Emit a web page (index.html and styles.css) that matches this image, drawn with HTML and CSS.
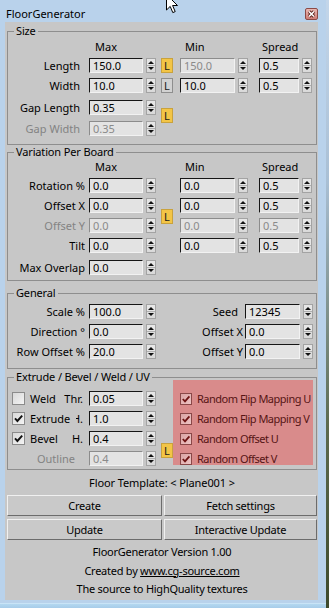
FILE: index.html
```html
<!DOCTYPE html>
<html>
<head>
<meta charset="utf-8">
<title>FloorGenerator</title>
<link rel="stylesheet" href="styles.css">
</head>
<body>
<div class="screen">
  <div class="window">
    <header class="titlebar">
      <span class="title">FloorGenerator</span>
      <span class="close">
        <svg width="11" height="10" viewBox="0 0 11 10"><path d="M3 2.5 L8 7.5 M8 2.5 L3 7.5" stroke="#5a1e1a" stroke-width="3.2"/><path d="M3 2.5 L8 7.5 M8 2.5 L3 7.5" stroke="#fff" stroke-width="1.6"/></svg>
      </span>
    </header>
    <main class="client">
      <fieldset class="group g-size">
        <legend>Size</legend>
        <div class="grid5 size-rows">
          <span class="hd c2 hd-max">Max</span>
          <span class="hd c4 hd-min">Min</span>
          <span class="hd c5 hd-spr">Spread</span>

          <span class="lbl c1">Length</span>
          <span class="ctl c2"><span class="num w54">150.0</span><span class="spin"></span></span>
          <span class="lock on c3">L</span>
          <span class="ctl c4"><span class="num w55 dis">150.0</span><span class="spin"></span></span>
          <span class="ctl c5"><span class="num w40">0.5</span><span class="spin"></span></span>

          <span class="lbl c1">Width</span>
          <span class="ctl c2"><span class="num w54">10.0</span><span class="spin"></span></span>
          <span class="lock off c3">L</span>
          <span class="ctl c4"><span class="num w55">10.0</span><span class="spin"></span></span>
          <span class="ctl c5"><span class="num w40">0.5</span><span class="spin"></span></span>

          <span class="lbl c1">Gap Length</span>
          <span class="ctl c2"><span class="num w54">0.35</span><span class="spin"></span></span>
          <span class="lock on c3 span2 lock-gap">L</span>

          <span class="lbl c1 dim">Gap Width</span>
          <span class="ctl c2"><span class="num w54 dis">0.35</span><span class="spin"></span></span>
        </div>
      </fieldset>

      <fieldset class="group g-var">
        <legend>Variation Per Board</legend>
        <div class="grid5 var-rows">
          <span class="hd c2 hd-max">Max</span>
          <span class="hd c4 hd-min">Min</span>
          <span class="hd c5 hd-spr">Spread</span>

          <span class="lbl c1">Rotation %</span>
          <span class="ctl c2"><span class="num w54">0.0</span><span class="spin"></span></span>
          <span class="ctl c4"><span class="num w55">0.0</span><span class="spin"></span></span>
          <span class="ctl c5"><span class="num w40">0.5</span><span class="spin"></span></span>

          <span class="lbl c1">Offset X</span>
          <span class="ctl c2"><span class="num w54">0.0</span><span class="spin"></span></span>
          <span class="lock on c3 span2 lock-var">L</span>
          <span class="ctl c4"><span class="num w55">0.0</span><span class="spin"></span></span>
          <span class="ctl c5"><span class="num w40">0.5</span><span class="spin"></span></span>

          <span class="lbl c1 dim">Offset Y</span>
          <span class="ctl c2"><span class="num w54 dis">0.0</span><span class="spin"></span></span>
          <span class="ctl c4"><span class="num w55 dis">0.0</span><span class="spin"></span></span>
          <span class="ctl c5"><span class="num w40 dis">0.5</span><span class="spin"></span></span>

          <span class="lbl c1">Tilt</span>
          <span class="ctl c2"><span class="num w54">0.0</span><span class="spin"></span></span>
          <span class="ctl c4"><span class="num w55">0.0</span><span class="spin"></span></span>
          <span class="ctl c5"><span class="num w40">0.5</span><span class="spin"></span></span>

          <span class="lbl c1">Max Overlap</span>
          <span class="ctl c2"><span class="num w54">0.0</span><span class="spin"></span></span>
        </div>
      </fieldset>

      <fieldset class="group g-gen">
        <legend>General</legend>
        <div class="gen-grid">
          <span class="lbl">Scale %</span>
          <span class="ctl"><span class="num w54">100.0</span><span class="spin"></span></span>
          <span class="rlbl seed">Seed</span>
          <span class="ctl"><span class="num w55">12345</span><span class="spin"></span></span>

          <span class="lbl">Direction °</span>
          <span class="ctl"><span class="num w54">0.0</span><span class="spin"></span></span>
          <span class="rlbl">Offset X</span>
          <span class="ctl"><span class="num w55">0.0</span><span class="spin"></span></span>

          <span class="lbl">Row Offset %</span>
          <span class="ctl"><span class="num w54">20.0</span><span class="spin"></span></span>
          <span class="rlbl">Offset Y</span>
          <span class="ctl"><span class="num w55">0.0</span><span class="spin"></span></span>
        </div>
      </fieldset>

      <fieldset class="group g-ext">
        <legend>Extrude / Bevel / Weld / UV</legend>
        <div class="ext-wrap">
          <div class="ext-grid">
            <span class="opt c1"><span class="cb"></span><span class="opt-name">Weld</span><span class="sub">Thr.</span></span>
            <span class="ctl c2"><span class="num w54">0.05</span><span class="spin"></span></span>

            <span class="opt c1"><span class="cb"><svg width="11" height="11" viewBox="0 0 11 11"><path d="M2 5.4 L4.4 8 L9.2 2.6" fill="none" stroke="#111" stroke-width="1.9"/></svg></span><span class="opt-name">Extrude</span><span class="sub clipped">H.</span></span>
            <span class="ctl c2"><span class="num w54">1.0</span><span class="spin"></span></span>

            <span class="opt c1"><span class="cb"><svg width="11" height="11" viewBox="0 0 11 11"><path d="M2 5.4 L4.4 8 L9.2 2.6" fill="none" stroke="#111" stroke-width="1.9"/></svg></span><span class="opt-name">Bevel</span><span class="sub">H.</span></span>
            <span class="ctl c2"><span class="num w54">0.4</span><span class="spin"></span></span>
            <span class="lock on c3 span2 lock-ext">L</span>

            <span class="opt c1"><span class="sub sub-outline dim">Outline</span></span>
            <span class="ctl c2"><span class="num w54 dis">0.4</span><span class="spin"></span></span>
          </div>
          <div class="uvbox">
            <span class="uvrow"><span class="cb cb-red"><svg width="10" height="10" viewBox="0 0 10 10"><path d="M1.8 5 L4 7.4 L8.4 2.4" fill="none" stroke="#6e1414" stroke-width="1.8"/></svg></span>Random Flip Mapping U</span>
            <span class="uvrow"><span class="cb cb-red"><svg width="10" height="10" viewBox="0 0 10 10"><path d="M1.8 5 L4 7.4 L8.4 2.4" fill="none" stroke="#6e1414" stroke-width="1.8"/></svg></span>Random Flip Mapping V</span>
            <span class="uvrow"><span class="cb cb-red"><svg width="10" height="10" viewBox="0 0 10 10"><path d="M1.8 5 L4 7.4 L8.4 2.4" fill="none" stroke="#6e1414" stroke-width="1.8"/></svg></span>Random Offset U</span>
            <span class="uvrow"><span class="cb cb-red"><svg width="10" height="10" viewBox="0 0 10 10"><path d="M1.8 5 L4 7.4 L8.4 2.4" fill="none" stroke="#6e1414" stroke-width="1.8"/></svg></span>Random Offset V</span>
          </div>
        </div>
      </fieldset>

      <p class="template">Floor Template: &lt; Plane001 &gt;</p>

      <div class="buttons">
        <button class="btn" type="button">Create</button>
        <button class="btn" type="button">Fetch settings</button>
        <button class="btn" type="button">Update</button>
        <button class="btn" type="button">Interactive Update</button>
      </div>

      <div class="credits">
        <p>FloorGenerator Version 1.00</p>
        <p>Created by <a href="#">www.cg-source.com</a></p>
        <p>The source to HighQuality textures</p>
      </div>
    </main>
    <div class="frame-bottom"></div>
  </div>
  <div class="desk"></div>
  <svg class="cursor" width="13" height="20" viewBox="0 0 13 20"><path d="M0.5 0.5 L0.5 16 L4.2 12.4 L6.8 18.6 L9.2 17.6 L6.6 11.5 L11.5 11.5 Z" fill="#fff" stroke="#000" stroke-width="1"/></svg>
</div>
</body>
</html>
```

FILE: styles.css
```css
* { box-sizing: border-box; }

html, body {
  margin: 0;
  padding: 0;
}

body {
  width: 329px;
  height: 608px;
  overflow: hidden;
  font-family: "Noto Sans", "Open Sans", sans-serif;
  font-size: 11px;
  color: #000;
  background: #b9d1ea;
}

.screen {
  position: relative;
  width: 329px;
  height: 608px;
  display: flex;
}

.window {
  width: 326px;
  height: 608px;
  background: #b9d2eb;
  display: flex;
  flex-direction: column;
}

.desk {
  width: 3px;
  height: 608px;
  background: linear-gradient(#c3d6ea 0, #a9bfd4 30%, #5d6b4f 70%, #3e4a2c 100%);
}

.cursor {
  position: absolute;
  left: 166px;
  top: -6px;
}

/* title bar */
.titlebar {
  height: 22px;
  flex: none;
  display: flex;
  justify-content: space-between;
  align-items: flex-start;
  padding: 6px 8px 0 6px;
}

.title {
  font-size: 11px;
  line-height: 16px;
  color: #000;
}

.close {
  margin-top: 2px;
  width: 13px;
  height: 12px;
  border: 1px solid #8c4a46;
  border-radius: 2px;
  background: linear-gradient(#e9b7b2, #cf7d76);
  display: flex;
  align-items: center;
  justify-content: center;
}

.close svg { display: block; }

/* client */
.client {
  margin-left: 5px;
  width: 313px;
  height: 578px;
  flex: none;
  background: #c7c7c7;
  padding: 0 1px 0 2px;
  display: flex;
  flex-direction: column;
}

.frame-bottom {
  flex: 1;
  margin: 3px 0 0 0;
  border-top: 1px solid #c9e4f6;
  background: linear-gradient(#b4d8f0, #a7cce9);
}

/* group boxes */
.group {
  margin: 0;
  padding: 0;
  min-width: 0;
  border: 1px solid #8e8e8e;
}

.group legend {
  margin-left: 6px;
  padding: 0 2px;
  font-size: 11px;
  line-height: 14px;
  letter-spacing: -0.15px;
}

.g-size { margin-top: 2px; }
.g-var { margin-top: 0; }
.g-gen { margin-top: 5px; }
.g-ext { margin-top: 1px; }

/* 5-column spinner grid */
.grid5 {
  display: grid;
  grid-template-columns: 81px 72px 19px 79px 53px;
}

.size-rows {
  grid-template-rows: 20px 20px 22px 21px 15px;
  padding-bottom: 8px;
}

.var-rows {
  grid-template-rows: 19px 20px 20px 20px 22px 15px;
  padding-bottom: 5px;
}

.c1 { grid-column: 1; }
.c2 { grid-column: 2; }
.c3 { grid-column: 3; }
.c4 { grid-column: 4; }
.c5 { grid-column: 5; }

.hd {
  line-height: 14px;
  align-self: start;
}
.size-rows .hd { margin-top: 2px; }
.var-rows .hd { margin-top: 1px; }
.hd-max { padding-left: 6px; }
.hd-min { padding-left: 5px; }
.hd-spr { padding-left: 3px; }

.lbl {
  align-self: start;
  text-align: right;
  line-height: 15px;
  padding-right: 4px;
  white-space: nowrap;
}
.size-rows .lbl { padding-right: 9px; }

.dim { color: #838383; }

.ctl {
  align-self: start;
  display: flex;
  gap: 3px;
  height: 15px;
}

.num {
  height: 15px;
  line-height: 13px;
  padding-left: 3px;
  border-top: 1px solid #161616;
  border-left: 1px solid #161616;
  border-right: 1px solid #f2f2f2;
  border-bottom: 1px solid #f2f2f2;
  background: #e3e3e3;
  color: #000;
  white-space: nowrap;
  overflow: hidden;
}
.num.dis {
  color: #8a8a8a;
  border-top-color: #8c8c8c;
  border-left-color: #8c8c8c;
}
.w54 { width: 54px; }
.w55 { width: 55px; }
.w40 { width: 40px; }

.spin {
  position: relative;
  width: 10px;
  height: 15px;
  border: 1px solid #a3a3a3;
  background: linear-gradient(to bottom, #e6e6e6 0, #e6e6e6 6px, #b0b0b0 6px, #b0b0b0 7px, #dedede 7px, #d9d9d9 100%);
}
.spin::before,
.spin::after {
  content: "";
  position: absolute;
  left: 1px;
  width: 0;
  height: 0;
  border-left: 3px solid transparent;
  border-right: 3px solid transparent;
}
.spin::before {
  top: 2px;
  border-bottom: 3px solid #111;
}
.spin::after {
  top: 8px;
  border-top: 3px solid #111;
}

/* lock buttons */
.lock {
  align-self: start;
  justify-self: start;
  width: 12px;
  height: 15px;
  border: 1px solid;
  display: flex;
  align-items: center;
  justify-content: center;
  font-size: 11px;
  line-height: 13px;
}
.lock.on {
  background: #f3c546;
  border-color: #c9a23d;
  color: #1a1a1a;
}
.lock.off {
  background: #d2d2d2;
  border-color: #8e8e8e;
  color: #1a1a1a;
}
.span2 {
  grid-row: span 2;
  align-self: center;
}
.lock-gap { margin-bottom: 5px; }
.lock-var { margin-bottom: 3px; }
.lock-ext { margin-top: 4px; }

/* general */
.gen-grid {
  display: grid;
  grid-template-columns: 81px 67px 89px 68px;
  grid-template-rows: 20px 20px 15px;
  padding: 4px 0 9px 0;
}
.rlbl {
  align-self: start;
  text-align: right;
  line-height: 15px;
  padding-right: 2px;
  white-space: nowrap;
}
.rlbl.seed { padding-right: 7px; }

/* extrude */
.ext-wrap {
  display: flex;
  align-items: flex-start;
}
.ext-grid {
  width: 165px;
  display: grid;
  grid-template-columns: 81px 72px 12px;
  grid-template-rows: 20px 20px 20px 15px;
  padding: 7px 0 3px 0;
}
.opt {
  align-self: start;
  display: flex;
  align-items: center;
  height: 15px;
  line-height: 15px;
  white-space: nowrap;
}
.cb {
  width: 13px;
  height: 13px;
  flex: none;
  margin-left: 4px;
  border: 1px solid #8b8b8b;
  background: linear-gradient(135deg, #d8d8d8, #f4f4f4);
  display: flex;
  align-items: center;
  justify-content: center;
}
.cb svg { display: block; }
.opt-name { margin-left: 5px; }
.sub {
  margin-left: auto;
  padding-right: 6px;
}
.clipped { clip-path: inset(0 0 0 4px); }
.sub-outline { padding-right: 14px; }

.uvbox {
  width: 140px;
  height: 85px;
  margin-top: -4px;
  background: #d98b8b;
  padding: 13px 0 0 7px;
  display: flex;
  flex-direction: column;
  gap: 8px;
  color: #561414;
  letter-spacing: -0.5px;
}
.uvrow {
  display: flex;
  align-items: center;
  height: 12px;
  line-height: 12px;
  white-space: nowrap;
  gap: 5px;
}
.cb.cb-red {
  width: 12px;
  height: 12px;
  margin-left: 0;
  border-color: #8a4848;
  background: linear-gradient(135deg, #d9a4a4, #eec4c4);
}

/* bottom */
.template {
  margin: 6px 0 0 0;
  text-align: center;
  line-height: 14px;
  letter-spacing: -0.1px;
}

.buttons {
  margin-top: 5px;
  display: grid;
  grid-template-columns: 155px 153px;
  grid-auto-rows: 21px;
  column-gap: 2px;
  row-gap: 3px;
}

.btn {
  margin: 0;
  padding: 0;
  font-family: inherit;
  font-size: 11px;
  letter-spacing: -0.25px;
  color: #000;
  background: #c9c9c9;
  border: 1px solid;
  border-color: #f0f0f0 #6c6c6c #6c6c6c #f0f0f0;
  border-radius: 0;
}

.credits {
  margin-top: 3px;
  text-align: center;
  letter-spacing: -0.25px;
}
.credits p {
  margin: 0;
  line-height: 18.5px;
}
.credits a {
  color: #000;
  text-decoration: underline;
}
```
